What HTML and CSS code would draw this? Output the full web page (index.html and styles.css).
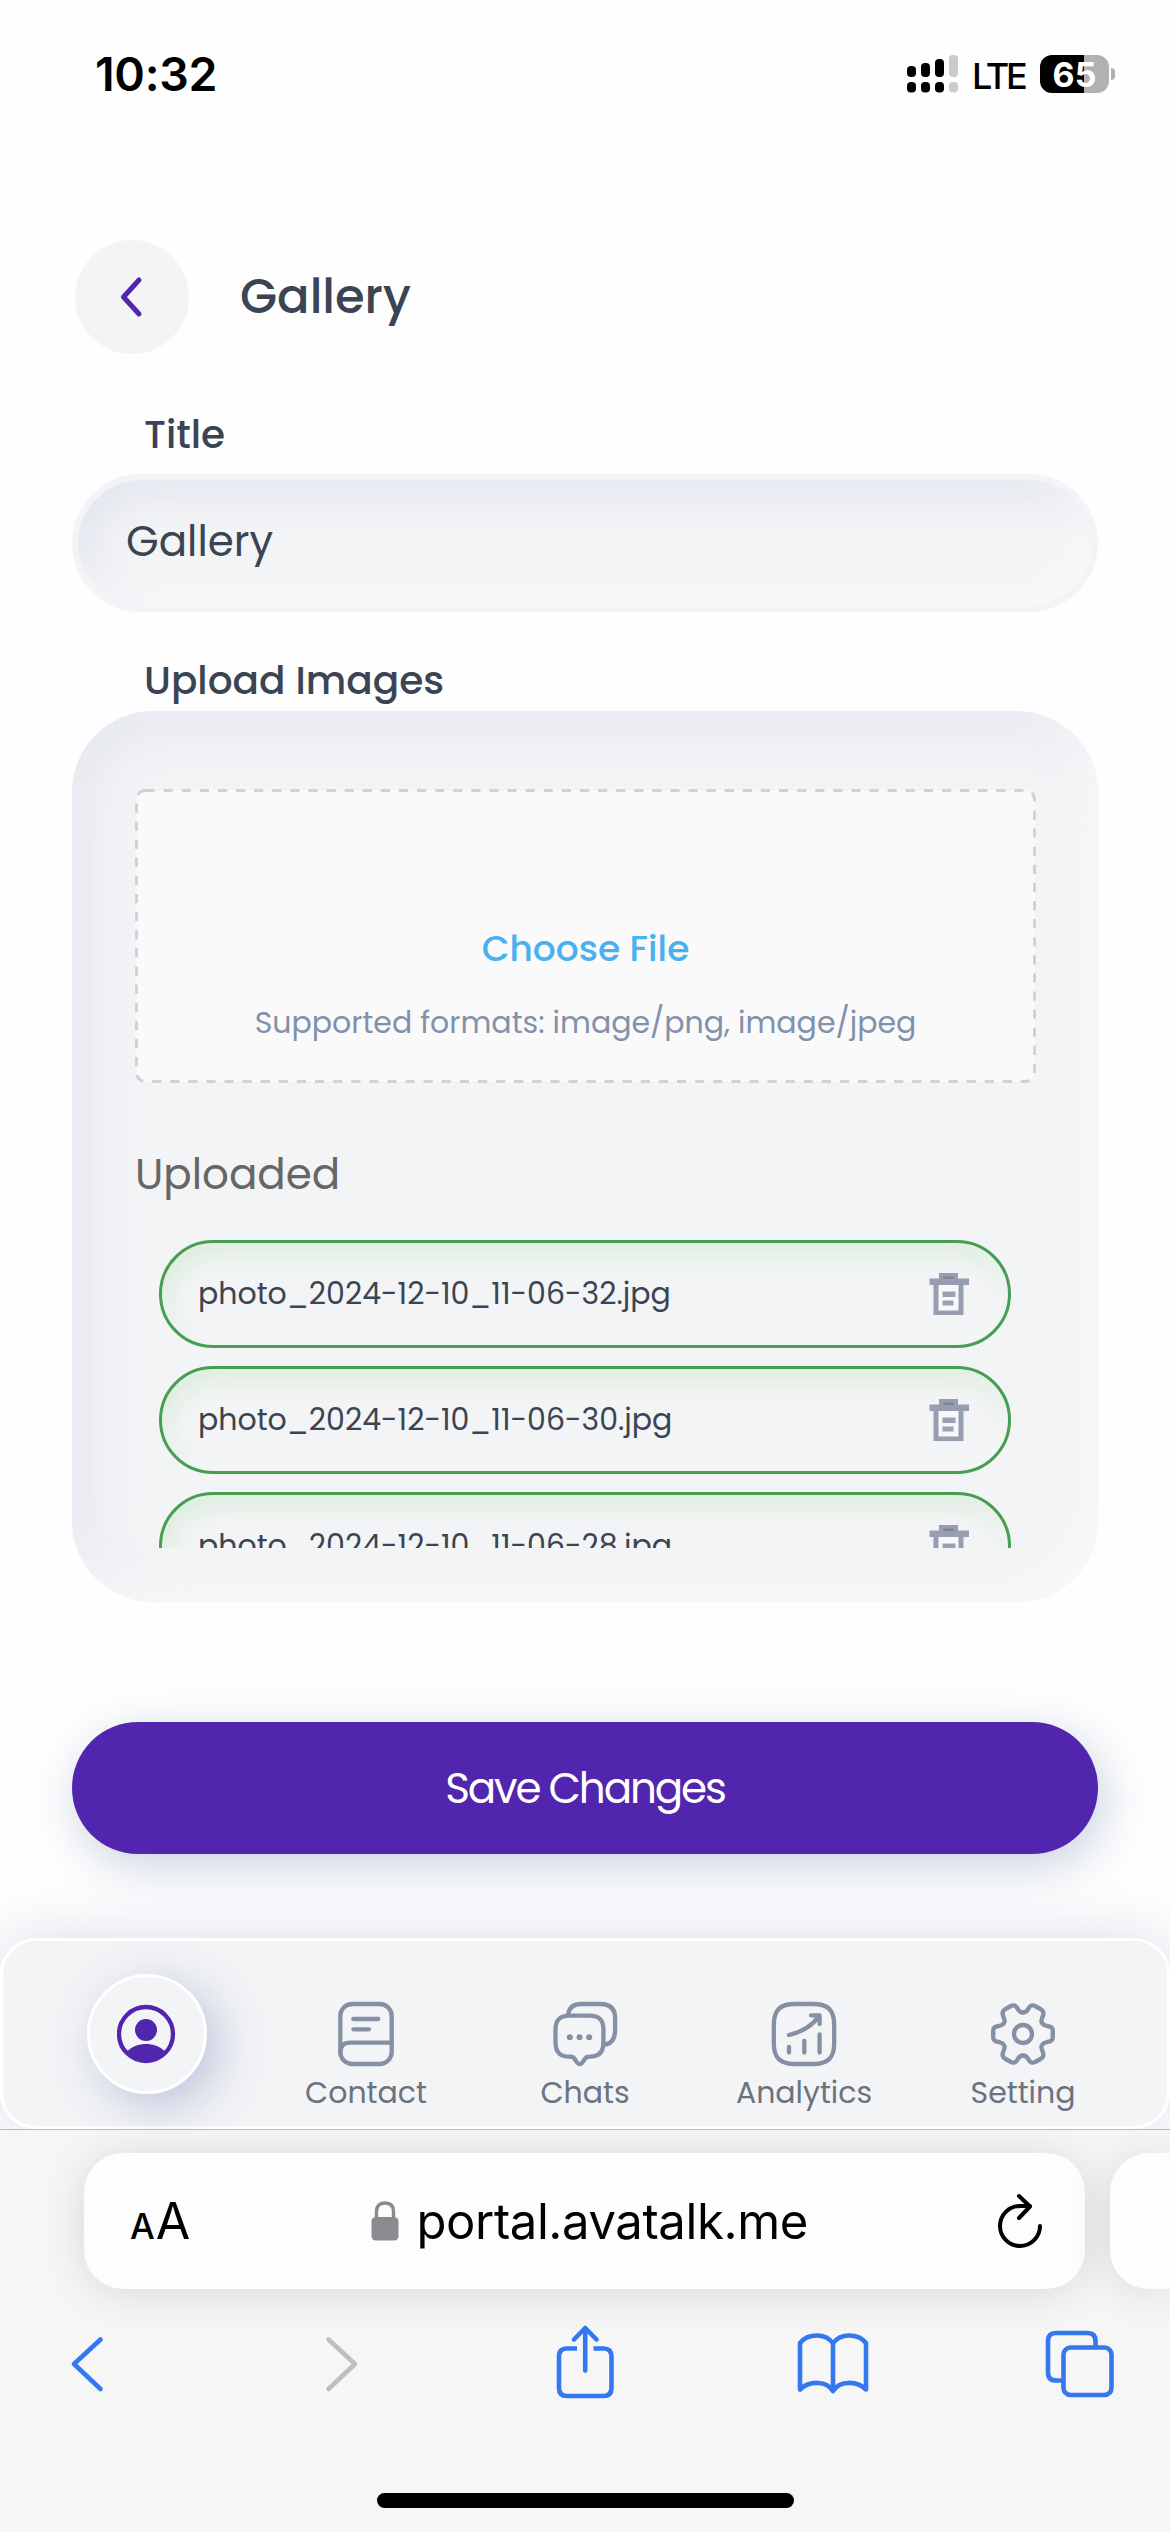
FILE: index.html
```html
<!DOCTYPE html>
<html lang="en">
<head>
<meta charset="utf-8">
<title>Gallery</title>
<link rel="stylesheet" href="styles.css">
</head>
<body>
<header class="status">
  <span class="status-time">10:32</span>
  <svg class="signal" viewBox="0 0 52 38" width="52" height="38">
    <g fill="#000"><rect x="0" y="11" width="9" height="11" rx="4"/><rect x="14" y="8" width="9" height="14" rx="4"/><rect x="28" y="4" width="9" height="18" rx="4"/><rect x="0" y="27" width="9" height="10.500" rx="4"/><rect x="14" y="27" width="9" height="10.500" rx="4"/><rect x="28" y="27" width="9" height="10.500" rx="4"/></g>
    <g fill="#cbcbcb"><rect x="42" y="0" width="9" height="22" rx="4"/><rect x="42" y="27" width="9" height="10.500" rx="4"/></g>
  </svg>
  <span class="status-net">LTE</span>
  <span class="battery"><span class="battery-level">65</span></span>
  <span class="battery-tip"></span>
</header>

<main class="page">
  <div class="title-row">
    <button class="back" aria-label="Back"><svg viewBox="0 0 30 46" width="30" height="46"><path d="M22 6 L6.500 23 L22 40" fill="none" stroke="#5225ae" stroke-width="5" stroke-linecap="round" stroke-linejoin="round"/></svg></button>
    <h1 class="title">Gallery</h1>
  </div>

  <div class="label label-first">Title</div>
  <div class="input"><span class="input-value">Gallery</span></div>

  <div class="label label-second">Upload Images</div>
  <section class="panel">
    <div class="drop">
      <svg class="drop-outline" width="901" height="294"><rect x="1.500" y="1.500" width="898" height="291" rx="9" fill="#fafafa" stroke="#cdd3dd" stroke-width="3" stroke-dasharray="9.200 8.900"/></svg>
      <div class="choose">Choose File</div>
      <div class="formats">Supported formats: image/png, image/jpeg</div>
    </div>
    <h2 class="uploaded">Uploaded</h2>
    <ul class="files">
      <li class="file"><span class="file-name">photo_2024-12-10_11-06-32.jpg</span><svg class="trash" viewBox="0 0 42 44" width="42" height="44"><use href="#trash"/></svg></li>
      <li class="file"><span class="file-name">photo_2024-12-10_11-06-30.jpg</span><svg class="trash" viewBox="0 0 42 44" width="42" height="44"><use href="#trash"/></svg></li>
      <li class="file"><span class="file-name">photo_2024-12-10_11-06-28.jpg</span><svg class="trash" viewBox="0 0 42 44" width="42" height="44"><use href="#trash"/></svg></li>
    </ul>
  </section>

  <button class="save">Save Changes</button>
</main>

<nav class="tabs">
  <a class="tab"><span class="tab-active"><svg viewBox="0 0 60 60" width="60" height="60"><circle cx="29" cy="30" r="27" fill="none" stroke="#5225ae" stroke-width="4.300"/><circle cx="29" cy="26" r="11" fill="#5225ae"/><path d="M10.500 47 C15 42.500 22 40 29 40 S43 42.500 47.500 47 C43.500 54 37 57.500 29 57.500 S14.500 54 10.500 47Z" fill="#5225ae"/></svg></span></a>
  <a class="tab"><svg class="icon" viewBox="0 0 66 66"><rect x="7.300" y="3" width="51.400" height="60" rx="12"/><path d="M20.300 18 H45.300 M20.300 28.300 H36 M7.300 52 C7.300 45 11 41.700 17 41.700 H58.700"/></svg><span class="tab-name">Contact</span></a>
  <a class="tab"><svg class="icon" viewBox="0 0 66 66"><path d="M16.300 12.500 C17.500 6.500 22 3 29 3 H48 C58 3 63.100 8 63.100 17 V29 C63.100 37.500 60 42.500 53 43.700"/><path d="M17.500 14.700 H37.500 C47 14.700 51.400 19 51.400 28.500 V41.500 C51.400 51 47 55.700 38 55.700 C33.500 55.700 33.500 57 31.500 60 C29 64.200 26.500 64.200 24 60 C22 57 22 55.700 17.500 55.700 C8 55.700 3.500 51 3.500 41.500 V28.500 C3.500 19 8 14.700 17.500 14.700Z"/><g class="solid"><circle cx="17.800" cy="36.300" r="3"/><circle cx="27.500" cy="36.300" r="3"/><circle cx="37.200" cy="36.300" r="3"/></g></svg><span class="tab-name">Chats</span></a>
  <a class="tab"><svg class="icon" viewBox="0 0 66 66"><path d="M24 3 H42 C57 3 63.200 9 63.200 24 V42 C63.200 57 57 63 42 63 H24 C9 63 2.800 57 2.800 42 V24 C2.800 9 9 3 24 3Z"/><path d="M18 46 V51.500 M33.300 40 V51.500 M48.600 33.500 V51.500 M18 34 C31 31 41 25 47.600 15.500 M40 14.300 H48.600 V23"/></svg><span class="tab-name">Analytics</span></a>
  <a class="tab"><svg class="icon" viewBox="-33 -33 66 66"><circle cx="0" cy="0" r="9"/><use href="#gear-quarter"/><use href="#gear-quarter" transform="scale(-1 1)"/><use href="#gear-quarter" transform="scale(1 -1)"/><use href="#gear-quarter" transform="scale(-1 -1)"/></svg><span class="tab-name">Setting</span></a>
</nav>

<footer class="browser">
  <div class="address-row">
    <div class="address">
      <span class="aa"><span class="aa-small">A</span><span class="aa-big">A</span></span>
      <span class="host"><svg viewBox="0 0 28 40" width="28" height="40"><rect x="0.500" y="16" width="27" height="23.500" rx="4.500" fill="#8a8a8f"/><path d="M5.500 17 V10.500 C5.500 4.500 9 2 14 2 S22.500 4.500 22.500 10.500 V17" fill="none" stroke="#8a8a8f" stroke-width="3.400"/></svg><span class="host-name">portal.avatalk.me</span></span>
      <svg class="reload" viewBox="0 0 48 58" width="48" height="58"><path d="M44 34 A20 20 0 1 1 24 14 H34 M23 4 L34 14.500 L23 26" fill="none" stroke="#000" stroke-width="4" stroke-linecap="round" stroke-linejoin="round"/></svg>
    </div>
    <div class="address-next"></div>
  </div>
  <div class="toolbar">
    <svg viewBox="0 0 34 80" width="34" height="80"><path d="M30.500 15.500 L4 40 L30.500 65" /></svg>
    <svg class="off" viewBox="0 0 34 80" width="34" height="80"><path d="M3.500 15.500 L30 40 L3.500 65"/></svg>
    <svg viewBox="0 0 60 80" width="60" height="80"><path class="butt" d="M22 24.500 H12 C6.500 24.500 4 27 4 32.500 V64 C4 69.500 6.500 72 12 72 H48.500 C54 72 56.500 69.500 56.500 64 V32.500 C56.500 27 54 24.500 48.500 24.500 H38.500"/><path d="M30.200 46.500 V4.500 M19 15.500 L30.200 4 L41.500 15.500"/></svg>
    <svg viewBox="0 0 74 80" width="74" height="80"><path d="M37 67 C31 57 14 56 4 65.500 V19 C12 9 30 9 37 19.500 C44 9 62 9 70 19 V65.500 C60 56 43 57 37 67 V19.500"/></svg>
    <svg viewBox="0 0 70 80" width="70" height="80"><rect x="18.500" y="23.500" width="48" height="47.500" rx="7"/><path class="butt" d="M18.500 56.500 H11 C5.500 56.500 3 54 3 48.500 V17 C3 11.500 5.500 9 11 9 H42.500 C48 9 50.500 11.500 50.500 17 V23.500"/></svg>
  </div>
  <div class="home-bar"></div>
</footer>

<svg class="defs" width="0" height="0">
  <defs>
    <g id="trash"><path d="M11 6.500 V1 H30 V6.500 H41 V13 H35.500 V43 H5.500 V13 H1.500 V6.500Z" fill="#979eb0"/><path d="M15.500 4.500 H26 V7 H15.500Z" fill="#7d8599"/><path d="M10.500 13 H30.500 V38.500 H10.500Z" fill="#f7f8fa"/><path d="M14.500 19.500 H27.500 V25 H14.500Z M14.500 28.500 H25.500 V33.500 H14.500Z" fill="#9aa1b2"/></g>
    <path id="gear-quarter" d="M0 -21.500 C3 -21.500 4.500 -23.500 5.500 -25.500 C7 -28.500 9.500 -29.500 12 -28 L17.500 -25 C20.500 -23 21 -21 20 -18.500 C19 -15.500 18 -14 18.500 -12 C19.500 -9.500 21.500 -8.500 24 -8 C28 -7.600 29.800 -6.500 29.800 -3.500 V0"/>
  </defs>
</svg>
</body>
</html>
```
FILE: styles.css
```css
* { box-sizing: border-box; margin: 0; padding: 0; }

body {
  width: 1170px;
  height: 2532px;
  overflow: hidden;
  background: #fefefe;
  font-family: Poppins, Inter, "Liberation Sans", sans-serif;
  color: #3b4452;
}

button { border: 0; font: inherit; }
span { white-space: nowrap; }

/* status bar */
.status {
  display: flex;
  align-items: center;
  height: 148px;
  padding: 0 55px 0 95px;
  color: #000;
  font-family: Inter, sans-serif;
}
.status-time { font-size: 46.5px; font-weight: 600; letter-spacing: -0.3px; margin-right: auto; }
.signal { margin-right: 13px; }
.status-net { width: 54px; font-size: 36px; font-weight: 500; letter-spacing: -3.2px; margin: 3px 14px 0 0; }
.battery {
  width: 69px;
  height: 38px;
  border-radius: 12px;
  background: linear-gradient(90deg, #000 44px, #b1b1b1 44px);
  display: flex;
  align-items: center;
  justify-content: center;
}
.battery-level { color: #fff; font-size: 34px; font-weight: 700; }
.battery-tip { width: 4px; height: 12px; margin-left: 2px; border-radius: 0 4px 4px 0; background: #b1b1b1; }

/* page content */
.page { display: flex; flex-direction: column; padding: 92px 72px 0; }
.title-row { display: flex; align-items: center; gap: 51px; height: 114px; padding-left: 3px; }
.back {
  width: 114px;
  height: 114px;
  border-radius: 50%;
  background: #f3f4f6;
  display: flex;
  align-items: center;
  justify-content: center;
}
.title { font-size: 48px; font-weight: 500; }
.label { height: 60px; line-height: 60px; padding-left: 72px; font-size: 39px; font-weight: 500; }
.label-first { margin-top: 51px; }
.label-second { margin-top: 39px; }

.input {
  height: 138px;
  margin-top: 9px;
  padding: 0 0 3px 48px;
  display: flex;
  align-items: center;
  border: 6px solid #f3f4f6;
  border-radius: 69px;
  background: #f3f4f6;
  box-shadow: inset -15px -15px 36px rgba(255, 255, 255, 0.5), inset 15px 15px 36px rgba(213, 217, 235, 0.5);
  font-size: 42px;
}

.panel {
  height: 891px;
  padding: 78px 62px 54px 63px;
  border-radius: 81px;
  background: #f3f4f6;
  box-shadow: inset -15px -15px 45px rgba(255, 255, 255, 0.6), inset 15px 15px 50px rgba(213, 217, 232, 0.5);
}
.drop { position: relative; height: 294px; padding-top: 130px; text-align: center; }
.drop-outline { position: absolute; left: 0; top: 0; }
.choose, .formats { position: relative; height: 60px; line-height: 60px; }
.choose { color: #4ab0f0; font-size: 36px; font-weight: 500; }
.formats { margin-top: 14px; color: #8291ab; font-size: 30px; }
.uploaded { margin-top: 62px; height: 60px; line-height: 60px; font-size: 42px; font-weight: 400; color: #666; }
.files { height: 308px; margin-top: 35px; padding: 0 25px 0 24px; overflow: hidden; list-style: none; }
.file {
  display: flex;
  align-items: center;
  justify-content: space-between;
  height: 108px;
  margin-bottom: 18px;
  padding: 0 38px 0 36px;
  border: 3px solid #479d52;
  border-radius: 54px;
  box-shadow: inset -6px -6px 18px rgba(255, 255, 255, 0.4), inset 4px 10px 24px rgba(120, 210, 110, 0.2);
  font-size: 30px;
}

.save {
  height: 132px;
  margin-top: 120px;
  border-radius: 66px;
  background: #5225ae;
  color: #fff;
  font-size: 42px;
  letter-spacing: -2.1px;
  box-shadow: 6px 12px 48px rgba(80, 105, 155, 0.3);
}

/* bottom navigation */
.tabs {
  display: grid;
  grid-template-columns: repeat(5, 219px);
  height: 191px;
  margin-top: 84px;
  padding-left: 34.5px;
  border: 3px solid #fff;
  border-radius: 36px;
  background: #f3f4f6;
  box-shadow: 0 0 60px rgba(90, 100, 160, 0.22);
}
.tab { display: flex; flex-direction: column; align-items: center; padding-top: 60px; color: #6b7280; }
.tab-active {
  width: 120px;
  height: 120px;
  margin-top: -27px;
  border: 3px solid #fff;
  border-radius: 50%;
  background: #f3f4f6;
  display: flex;
  align-items: center;
  justify-content: center;
  box-shadow: 12px 12px 48px rgba(80, 105, 165, 0.34);
}
.icon { width: 66px; height: 66px; fill: none; stroke: #8490a3; stroke-width: 4.3; stroke-linecap: round; stroke-linejoin: round; }
.solid { fill: #8490a3; stroke: none; }
.tab-name { height: 44px; line-height: 44px; margin-top: 4px; font-size: 30px; }

/* browser chrome */
.browser { position: relative; height: 403px; padding-top: 23px; border-top: 1px solid #b9b9bd; background: #f6f6f7; font-family: Inter, sans-serif; overflow: hidden; }
.address-row { display: flex; gap: 25px; padding-left: 84px; }
.address {
  width: 1001px;
  height: 136px;
  border-radius: 39px;
  background: #fdfdfd;
  box-shadow: 0 3px 45px rgba(0, 0, 0, 0.12);
  display: flex;
  align-items: center;
  justify-content: space-between;
  padding: 0 41px 0 46px;
  color: #000;
}
.address-next { flex: 1; border-radius: 39px 0 0 39px; background: #fdfdfd; box-shadow: 0 3px 45px rgba(0, 0, 0, 0.12); }
.aa { display: flex; align-items: baseline; gap: 1px; }
.aa-small { font-size: 35px; font-weight: 500; }
.aa-big { font-size: 50px; }
.host { display: flex; align-items: center; gap: 18px; margin-right: 8px; }
.host-name { font-size: 49px; letter-spacing: -0.4px; }
.toolbar {
  display: grid;
  grid-template-columns: 255px 230.5px 240.5px 249.5px 70px;
  margin-top: 35px;
  padding-left: 69.5px;
}
.toolbar svg { fill: none; stroke: #3478f0; stroke-width: 4.6; stroke-linecap: round; stroke-linejoin: round; }
.toolbar .off { stroke: #bfbfc0; }
.toolbar .butt { stroke-linecap: butt; }
.home-bar { width: 417px; height: 15px; margin: 89px auto 0; border-radius: 8px; background: #000; }
.defs { position: absolute; }
```
